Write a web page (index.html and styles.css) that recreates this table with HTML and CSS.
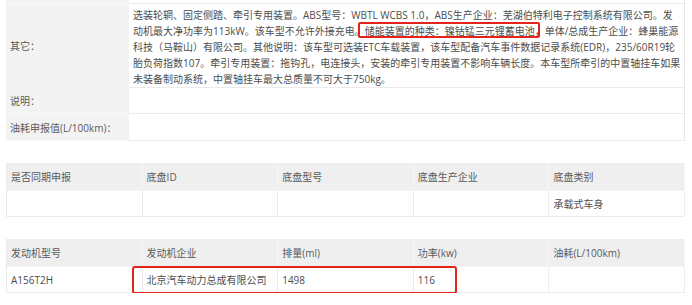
FILE: index.html
```html
<!DOCTYPE html>
<html lang="zh-CN">
<head>
<meta charset="utf-8">
<title>车型参数</title>
<link rel="stylesheet" href="styles.css">
</head>
<body>
<div class="page">
  <div class="spec">
    <div class="row row-top"><div class="label"></div><div class="value"></div></div>
    <div class="row row-other">
      <div class="label">其它：</div>
      <div class="value text">选装轮辋、固定侧踏、牵引专用装置。ABS型号：WBTL WCBS 1.0，ABS生产企业：芜湖伯特利电子控制系统有限公司。发<br>动机最大净功率为113kW。该车型不允许外接充电。<span class="hl">储能装置的种类：镍钴锰三元锂蓄电池，</span>单体/总成生产企业：蜂巢能源<br>科技（马鞍山）有限公司。其他说明：该车型可选装ETC车载装置，该车型配备汽车事件数据记录系统(EDR)，235/60R19轮<br>胎负荷指数107。牵引专用装置：拖钩孔，电连接头，安装的牵引专用装置不影响车辆长度。本车型所牵引的中置轴挂车如果<br>未装备制动系统，中置轴挂车最大总质量不可大于750kg。</div>
    </div>
    <div class="row row-small"><div class="label">说明：</div><div class="value"></div></div>
    <div class="row row-small"><div class="label">油耗申报值(L/100km)：</div><div class="value"></div></div>
  </div>

  <div class="grid5">
    <div class="cell head">是否同期申报</div>
    <div class="cell head">底盘ID</div>
    <div class="cell head">底盘型号</div>
    <div class="cell head">底盘生产企业</div>
    <div class="cell head">底盘类别</div>
    <div class="cell"></div>
    <div class="cell"></div>
    <div class="cell"></div>
    <div class="cell"></div>
    <div class="cell">承载式车身</div>
  </div>

  <div class="grid5 engine">
    <div class="cell head">发动机型号</div>
    <div class="cell head">发动机企业</div>
    <div class="cell head">排量(ml)</div>
    <div class="cell head">功率(kw)</div>
    <div class="cell head">油耗(L/100km)</div>
    <div class="cell">A156T2H</div>
    <div class="cell">北京汽车动力总成有限公司</div>
    <div class="cell">1498</div>
    <div class="cell">116</div>
    <div class="cell"></div>
    <div class="mark"></div>
  </div>
</div>
</body>
</html>
```

FILE: styles.css
```css
* { box-sizing: border-box; }

html, body {
  margin: 0;
  padding: 0;
  background: #ffffff;
}

body {
  font-family: "Open Sans", "Noto Sans CJK SC", sans-serif;
  font-size: 10px;
  color: #555555;
}

.page {
  width: 692px;
  padding: 0 7px 0 6px;
}

.spec {
  width: 679px;
}

.row {
  display: grid;
  grid-template-columns: 123px 1fr;
}

.label {
  background: #f3f3f3;
  border-bottom: 1px solid #fafafa;
  display: flex;
  align-items: center;
  padding-left: 4px;
  color: #5a5a5a;
  white-space: nowrap;
}

.value {
  border-bottom: 1px solid #ebebeb;
  border-right: 1px solid #e8e8e8;
}

.row-top { height: 4px; }
.row-other { height: 83px; }
.row-small { height: 27px; }

.text {
  padding: 3px 0 0 4px;
  line-height: 16px;
  white-space: nowrap;
  color: #4d4d4d;
}

.hl {
  position: relative;
}

.hl::after {
  content: "";
  position: absolute;
  left: -7px;
  right: 5px;
  top: -2px;
  bottom: 0;
  border: 2px solid #e3241c;
  border-radius: 2px;
}

.grid5 {
  position: relative;
  width: 679px;
  margin-top: 22px;
  display: grid;
  grid-template-columns: repeat(5, 1fr);
  grid-template-rows: 28px 26px;
  border-left: 1px solid #ececec;
}

.cell {
  display: flex;
  align-items: center;
  padding-left: 4px;
  border-right: 1px solid #ececec;
  border-bottom: 1px solid #ececec;
  color: #4d4d4d;
  white-space: nowrap;
}

.cell.head {
  background: #efefef;
  border-right-color: #f7f7f7;
  border-bottom-color: #f3f3f3;
  color: #5a5a5a;
}

.mark {
  position: absolute;
  left: 125px;
  top: 27px;
  width: 325px;
  height: 28px;
  border: 2px solid #e3241c;
  border-radius: 3px;
}
```
